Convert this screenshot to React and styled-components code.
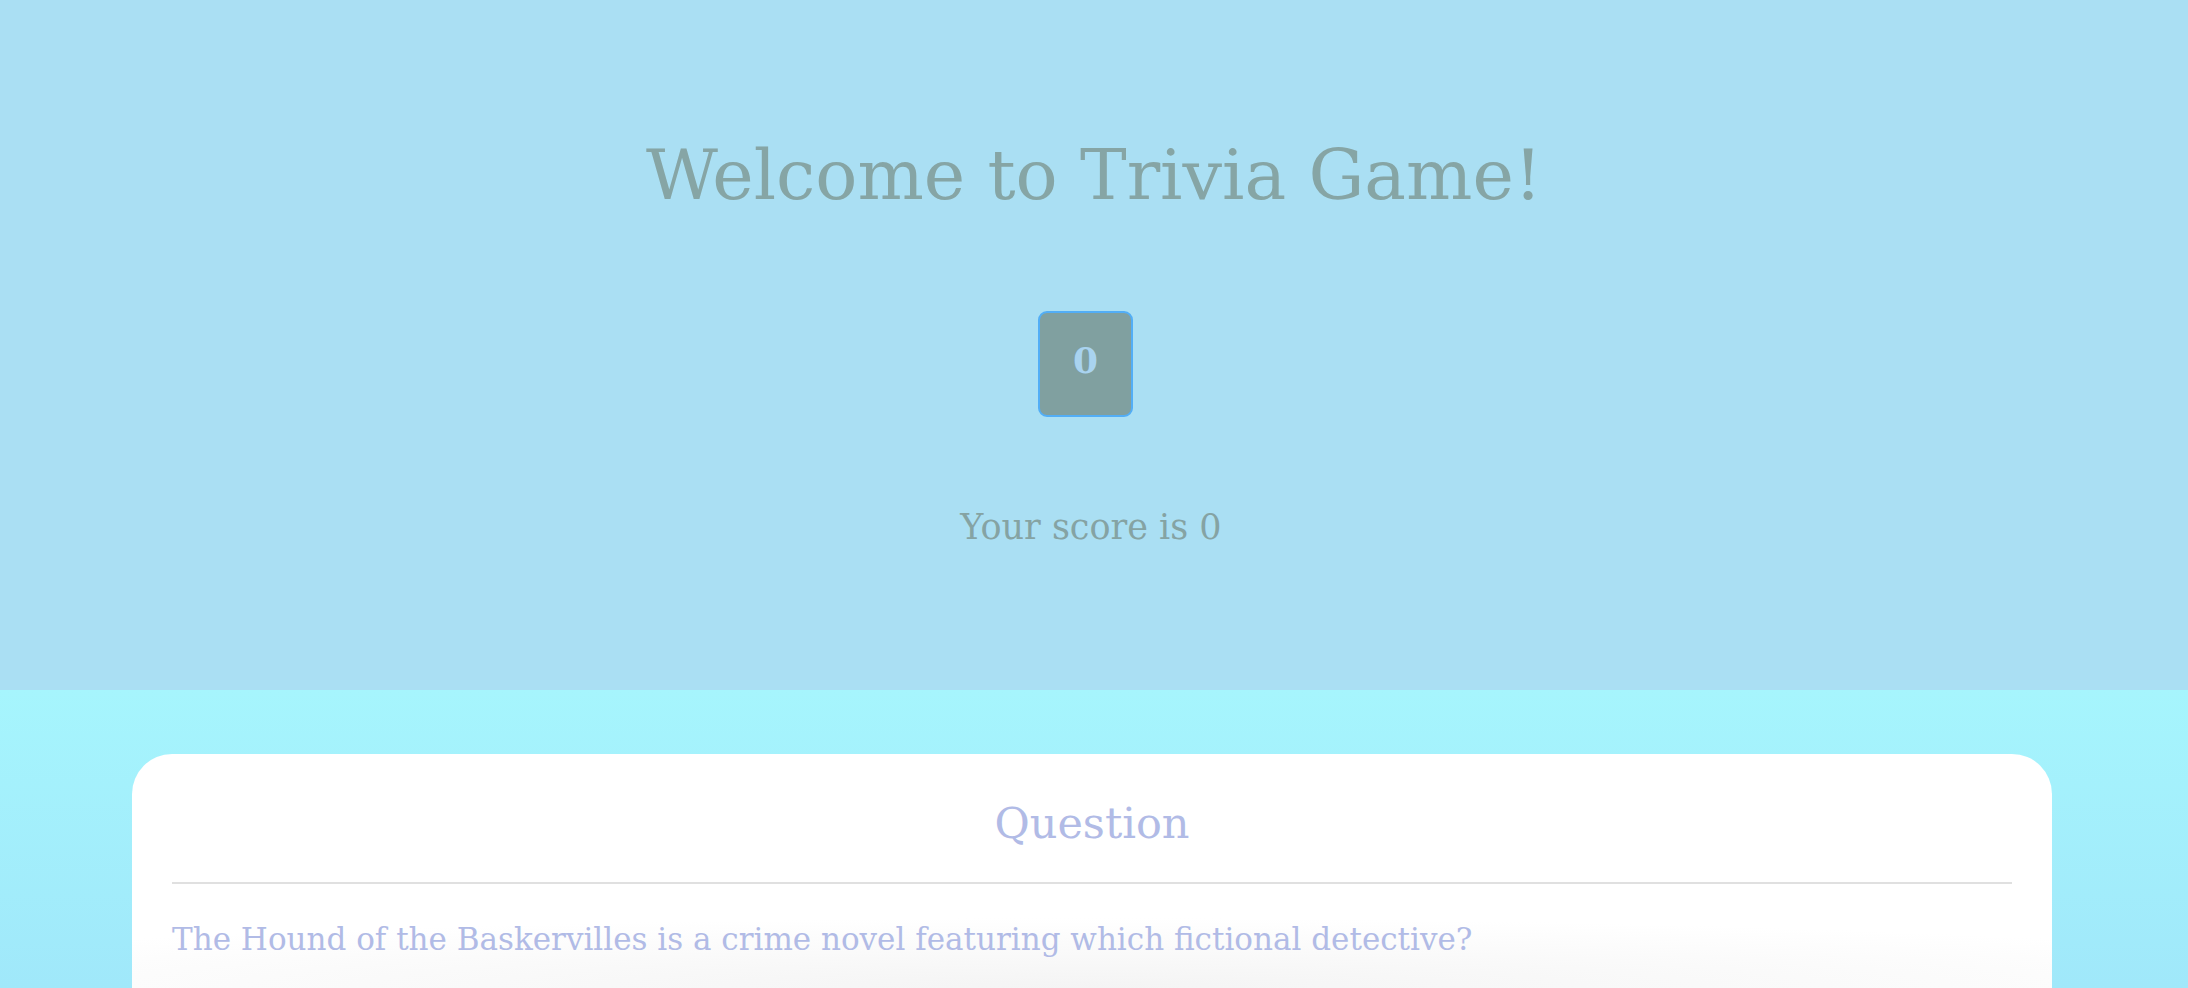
import React from "react";
import styled, { createGlobalStyle } from "styled-components";

const Global = createGlobalStyle`
  html, body { margin: 0; padding: 0; }
  body {
    font-family: "DejaVu Serif", Georgia, serif;
    background: linear-gradient(180deg, #a6f5fd 690px, #a0e8fa 988px);
    min-height: 988px;
    overflow: hidden;
  }
`;

const Page = styled.div`
  display: flex;
  flex-direction: column;
  height: 988px;
`;

const Header = styled.header`
  height: 690px;
  box-sizing: border-box;
  padding-top: 133px;
  background: #aadff3;
  display: flex;
  flex-direction: column;
  align-items: center;
`;

const Title = styled.h1`
  margin: 0;
  font-size: 70px;
  line-height: 84px;
  font-weight: normal;
  color: #86a5a5;
`;

const ScoreBox = styled.div`
  margin: 94px 17px 0 0;
  box-sizing: border-box;
  width: 95px;
  height: 106px;
  border: 2px solid #52aef6;
  border-radius: 9px;
  background: #80a0a0;
  color: #a9d3ef;
  font-size: 36px;
  font-weight: bold;
  display: flex;
  align-items: center;
  justify-content: center;
  padding-bottom: 8px;
`;

const ScoreText = styled.p`
  margin: 89px 6px 0 0;
  font-size: 35px;
  line-height: 43px;
  color: #85a3a3;
`;

const Card = styled.section`
  margin: 64px auto 0;
  width: 1920px;
  flex: 1;
  box-sizing: border-box;
  padding: 43px 40px 0;
  border-radius: 40px 40px 0 0;
  background: radial-gradient(70% 70px at 50% 100%, #f4f4f4, #ffffff);
  transform: translateX(-2px);
`;

const CardHeading = styled.h2`
  margin: 0;
  text-align: center;
  font-size: 43px;
  line-height: 52px;
  font-weight: normal;
  color: #b1bbe6;
`;

const Divider = styled.hr`
  margin: 33px 0 0;
  border: none;
  height: 2px;
  background: #e0e0e0;
`;

const QuestionText = styled.p`
  margin: 36px 0 0;
  font-size: 31px;
  line-height: 38px;
  color: #b1bbe6;
`;

export default function App() {
  return (
    <Page>
      <Global />
      <Header>
        <Title>Welcome to Trivia Game!</Title>
        <ScoreBox>0</ScoreBox>
        <ScoreText>Your score is 0</ScoreText>
      </Header>
      <Card>
        <CardHeading>Question</CardHeading>
        <Divider />
        <QuestionText>
          The Hound of the Baskervilles is a crime novel featuring which fictional detective?
        </QuestionText>
      </Card>
    </Page>
  );
}
